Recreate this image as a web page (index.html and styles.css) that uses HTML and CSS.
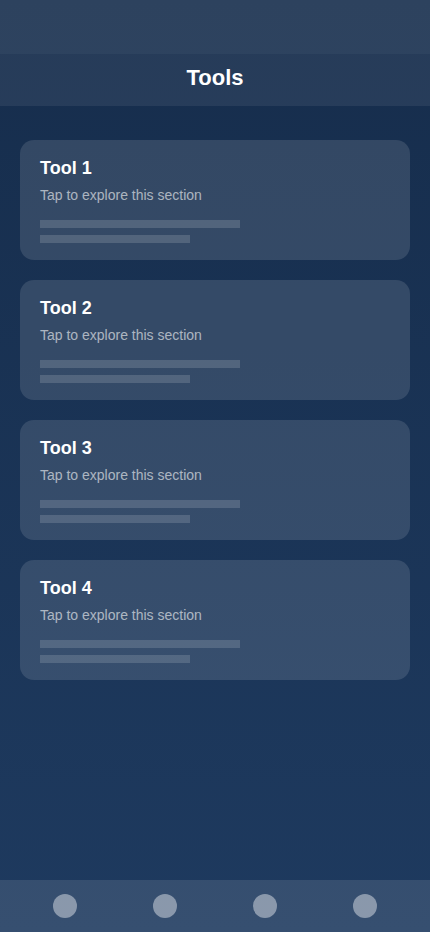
FILE: index.html
```html
<!DOCTYPE html>
<html lang="en">
<head>
<meta charset="utf-8">
<meta name="viewport" content="width=device-width, initial-scale=1">
<title>Tools</title>
<link rel="stylesheet" href="styles.css">
</head>
<body>
<div class="app">
  <div class="status-bar"></div>
  <header class="header"><h1 class="header-title">Tools</h1></header>
  <main class="content">
    <div class="card">
      <h3 class="card-title">Tool 1</h3>
      <p class="card-sub">Tap to explore this section</p>
      <div class="bar bar-long"></div>
      <div class="bar bar-short"></div>
    </div>
    <div class="card">
      <h3 class="card-title">Tool 2</h3>
      <p class="card-sub">Tap to explore this section</p>
      <div class="bar bar-long"></div>
      <div class="bar bar-short"></div>
    </div>
    <div class="card">
      <h3 class="card-title">Tool 3</h3>
      <p class="card-sub">Tap to explore this section</p>
      <div class="bar bar-long"></div>
      <div class="bar bar-short"></div>
    </div>
    <div class="card">
      <h3 class="card-title">Tool 4</h3>
      <p class="card-sub">Tap to explore this section</p>
      <div class="bar bar-long"></div>
      <div class="bar bar-short"></div>
    </div>
  </main>
  <nav class="tab-bar">
    <span class="tab-dot"></span>
    <span class="tab-dot"></span>
    <span class="tab-dot"></span>
    <span class="tab-dot"></span>
  </nav>
</div>
</body>
</html>
```
FILE: styles.css
```css
* { box-sizing: border-box; }
html, body { margin: 0; padding: 0; }
body {
  font-family: "Liberation Sans", Arial, sans-serif;
  color: #fff;
}
.app {
  width: 430px;
  height: 932px;
  display: flex;
  flex-direction: column;
  background: linear-gradient(180deg, #162d4c 0%, #1e3a5f 100%);
}
.status-bar {
  height: 54px;
  flex: none;
  background: rgba(255, 255, 255, 0.1);
}
.header {
  height: 52px;
  flex: none;
  display: flex;
  align-items: center;
  justify-content: center;
  padding-bottom: 5px;
  background: rgba(255, 255, 255, 0.07);
}
.header-title {
  margin: 0;
  font-size: 22px;
  font-weight: 700;
  line-height: 26px;
}
.content {
  flex: 1;
  padding: 34px 20px 0;
  display: flex;
  flex-direction: column;
  gap: 20px;
}
.card {
  height: 120px;
  padding: 17px 20px 0;
  border-radius: 14px;
  background: rgba(255, 255, 255, 0.12);
}
.card-title {
  margin: 0;
  font-size: 18px;
  line-height: 22px;
  font-weight: 700;
  color: #fff;
}
.card-sub {
  margin: 6px 0 0;
  font-size: 14px;
  line-height: 20px;
  color: rgba(255, 255, 255, 0.6);
}
.bar {
  height: 8px;
  background: rgba(255, 255, 255, 0.15);
}
.bar-long { width: 200px; margin-top: 15px; }
.bar-short { width: 150px; margin-top: 7px; }
.tab-bar {
  height: 52px;
  flex: none;
  display: flex;
  align-items: center;
  justify-content: center;
  gap: 76px;
  background: rgba(255, 255, 255, 0.11);
}
.tab-dot {
  width: 24px;
  height: 24px;
  border-radius: 50%;
  background: rgba(255, 255, 255, 0.42);
}
```
